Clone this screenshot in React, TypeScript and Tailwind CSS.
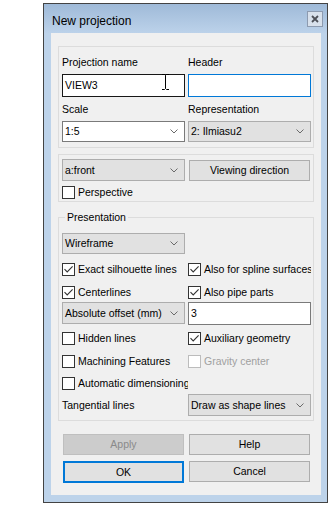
import React from "react";

function Chevron() {
  return (
    <svg width="8" height="5" viewBox="0 0 8 5" className="shrink-0">
      <path d="M0.5 0.5 L4 4 L7.5 0.5" fill="none" stroke="#6a6a6a" strokeWidth="1" />
    </svg>
  );
}

function Check({ checked = false, disabled = false }: { checked?: boolean; disabled?: boolean }) {
  return (
    <span
      className={`flex items-center justify-center w-[13px] h-[13px] shrink-0 border bg-white ${
        disabled ? "border-[#bcbcbc]" : "border-[#333333]"
      }`}
    >
      {checked && (
        <svg width="11" height="11" viewBox="0 0 11 11">
          <path d="M1.5 5.2 L4.2 8 L9.6 2.4" fill="none" stroke="#333333" strokeWidth="1.1" />
        </svg>
      )}
    </span>
  );
}

function CheckRow({
  label,
  checked = false,
  disabled = false,
  w,
}: {
  label: string;
  checked?: boolean;
  disabled?: boolean;
  w: "left" | "right";
}) {
  return (
    <div
      className={`flex items-center gap-[3px] h-[13px] overflow-hidden whitespace-nowrap ${
        w === "left" ? "w-[126px]" : "w-[123px]"
      } ${disabled ? "text-[#a0a0a0]" : "text-black"}`}
    >
      <Check checked={checked} disabled={disabled} />
      <span>{label}</span>
    </div>
  );
}

function GrayCombo({ text, tall = false }: { text: string; tall?: boolean }) {
  return (
    <div
      className={`flex items-center justify-between w-[123px] ${
        tall ? "h-[22px]" : "h-[21px]"
      } pl-[2px] pr-[6px] border border-[#adadad] bg-[#e1e1e1] whitespace-nowrap`}
    >
      <span>{text}</span>
      <Chevron />
    </div>
  );
}

function Button({ text, disabled = false, primary = false }: { text: string; disabled?: boolean; primary?: boolean }) {
  return (
    <div
      className={`flex items-center justify-center w-[121px] ${
        disabled
          ? "h-[21px] border border-[#bfbfbf] bg-[#cccccc] text-[#8a8a8a]"
          : primary
          ? "h-[22px] border-2 border-[#0078d7] bg-[#e1e1e1] text-black"
          : "h-[21px] border border-[#adadad] bg-[#e1e1e1] text-black"
      }`}
    >
      {text}
    </div>
  );
}

export default function App() {
  return (
    <div className="w-[330px] h-[505px] bg-white pt-[3px] pl-[43px] font-['Liberation_Sans',Arial,sans-serif] text-[10.5px] leading-[13px] text-black">
      <div className="flex flex-col w-[285px] h-[500px] border border-[#434343] bg-[#bdd3ea]">
        {/* title bar */}
        <div className="flex items-start justify-between h-[29px] bg-gradient-to-b from-[#9fbad8] to-[#bcd2ea]">
          <span className="mt-[10px] ml-[8px] text-[12px] leading-[14px]">New projection</span>
          <div className="flex items-center justify-center mt-[7px] mr-[4px] w-[16px] h-[16px] border border-[#8d9bb0] bg-[#d8e1ec]">
            <svg width="8" height="8" viewBox="0 0 8 8">
              <path d="M1 1 L7 7 M7 1 L1 7" stroke="#4d5058" strokeWidth="1.8" />
            </svg>
          </div>
        </div>

        {/* client */}
        <div className="flex flex-col flex-1 ml-[7px] mr-[6px] mb-[7px] bg-[#f0f0f0] px-[7px] pt-[13px]">
          {/* group 1 */}
          <div className="border border-[#dcdcdc] pl-[3px] pr-[2px] pt-[9px] pb-[5px]">
            <div className="flex gap-[3px]">
              <div className="flex flex-col w-[123px]">
                <span className="h-[13px]">Projection name</span>
                <div className="relative mt-[5px] flex items-center h-[23px] border border-[#171717] bg-white pl-[2px]">
                  VIEW3
                  <svg
                    className="absolute left-[98px] top-[-2px]"
                    width="9"
                    height="18"
                    viewBox="0 0 9 18"
                  >
                    <path
                      d="M1 1.5 H3.5 L4.5 2.5 L5.5 1.5 H8 M4.5 2.5 V15.5 M1 16.5 H3.5 L4.5 15.5 L5.5 16.5 H8"
                      fill="none"
                      stroke="#000"
                      strokeWidth="1"
                    />
                  </svg>
                </div>
                <span className="mt-[6px] h-[13px]">Scale</span>
                <div className="mt-[5px] flex items-center justify-between h-[21px] border border-[#7a7a7a] bg-white pl-[2px] pr-[6px]">
                  <span>1:5</span>
                  <Chevron />
                </div>
              </div>
              <div className="flex flex-col w-[123px]">
                <span className="h-[13px]">Header</span>
                <div className="mt-[5px] h-[23px] border border-[#0078d7] bg-white" />
                <span className="mt-[6px] h-[13px]">Representation</span>
                <div className="mt-[5px]">
                  <GrayCombo text="2: Ilmiasu2" />
                </div>
              </div>
            </div>
          </div>

          {/* group 2 */}
          <div className="mt-[6px] border border-[#dcdcdc] pl-[3px] pr-[2px] pt-[4px] pb-[2px]">
            <div className="flex">
              <div className="w-[126px]">
                <GrayCombo text="a:front" tall />
              </div>
              <div className="w-[123px] pl-[1px] pt-[1px]">
                <Button text="Viewing direction" />
              </div>
            </div>
            <div className="mt-[5px]">
              <CheckRow label="Perspective" w="left" />
            </div>
          </div>

          {/* group 3 */}
          <fieldset className="mt-[8px] min-w-0 border border-[#dcdcdc] pl-[3px] pr-[2px] pt-[9px] pb-[4px]">
            <legend className="ml-[3px] px-[2px] leading-[14px]">Presentation</legend>
            <GrayCombo text="Wireframe" />
            <div className="flex mt-[9px]">
              <CheckRow label="Exact silhouette lines" checked w="left" />
              <CheckRow label="Also for spline surfaces" checked w="right" />
            </div>
            <div className="flex mt-[10px]">
              <CheckRow label="Centerlines" checked w="left" />
              <CheckRow label="Also pipe parts" checked w="right" />
            </div>
            <div className="flex mt-[3px]">
              <div className="w-[126px]">
                <GrayCombo text="Absolute offset (mm)" tall />
              </div>
              <div className="flex items-center w-[123px] h-[23px] border border-[#7a7a7a] bg-white pl-[2px]">3</div>
            </div>
            <div className="flex mt-[7px]">
              <CheckRow label="Hidden lines" w="left" />
              <CheckRow label="Auxiliary geometry" checked w="right" />
            </div>
            <div className="flex mt-[10px]">
              <CheckRow label="Machining Features" w="left" />
              <CheckRow label="Gravity center" disabled w="right" />
            </div>
            <div className="flex mt-[9px]">
              <CheckRow label="Automatic dimensioning" w="left" />
            </div>
            <div className="flex items-center mt-[4px]">
              <span className="w-[126px]">Tangential lines</span>
              <GrayCombo text="Draw as shape lines" tall />
            </div>
          </fieldset>

          {/* buttons */}
          <div className="flex flex-col gap-[6px] mt-[13px] pl-[4px]">
            <div className="flex">
              <div className="w-[126px] pl-[1px]">
                <Button text="Apply" disabled />
              </div>
              <div className="pl-[1px]">
                <Button text="Help" />
              </div>
            </div>
            <div className="flex">
              <div className="w-[126px] pl-[1px]">
                <Button text="OK" primary />
              </div>
              <div className="pl-[1px]">
                <Button text="Cancel" />
              </div>
            </div>
          </div>
        </div>
      </div>
    </div>
  );
}
